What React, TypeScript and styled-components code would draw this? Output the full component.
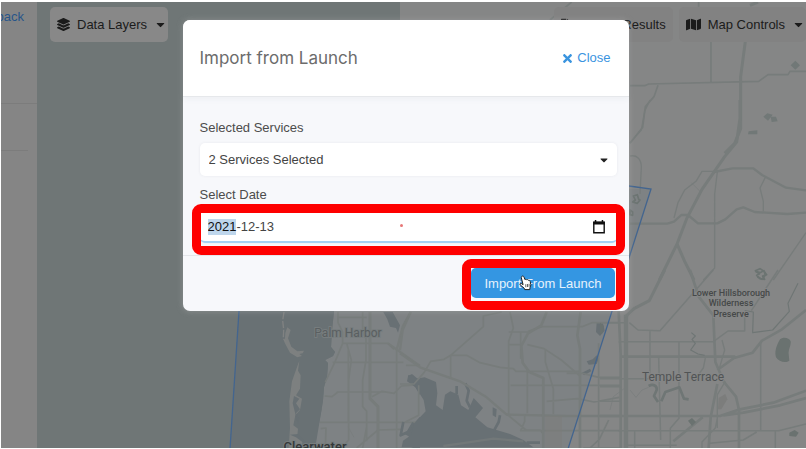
import React, { useEffect, useRef } from 'react';
import styled, { createGlobalStyle, css } from 'styled-components';
import { FaLayerGroup, FaMap, FaFileExport, FaTimes, FaCaretDown } from 'react-icons/fa';

const GlobalStyle = createGlobalStyle`
  *, *::before, *::after { box-sizing: border-box; }
  body { margin: 0; background: #fff; font-family: "Liberation Sans", Arial, sans-serif; font-size: 13px; }
  button, input, select { font: inherit; margin: 0; }
`;

const Page = styled.div`
  display: flex;
  height: 100vh;
  padding: 2px 0 1px 1px;
`;

const Shell = styled.div`
  position: relative;
  display: flex;
  flex: 1;
  min-width: 0;
  overflow: hidden;
`;

const Sidebar = styled.aside`
  display: flex;
  flex-direction: column;
  flex: 0 0 36px;
  overflow: hidden;
  background: #858585;
`;

const SidebarTop = styled.div`
  display: flex;
  justify-content: flex-end;
  height: 102px;
  padding: 5px 13px 0 0;
  border-bottom: 1px solid #7c7c7c;
`;

const BackLink = styled.a`
  height: 20px;
  color: #28558a;
  line-height: 20px;
  text-decoration: none;
`;

const SidebarRow = styled.div`
  height: 47px;
  margin-right: 9px;
  border-bottom: 1px solid #7c7c7c;
`;

const MapPane = styled.main`
  position: relative;
  flex: 1;
  min-width: 0;
  overflow: hidden;
  background: #6f7676;
`;

const MapCanvas = styled.svg`
  position: absolute;
  inset: 0;
  width: 100%;
  height: 100%;
`;

const Toolbar = styled.div`
  position: relative;
  display: flex;
  justify-content: space-between;
  padding: 5px 0 0 13px;
`;

const ToolGroup = styled.div`
  display: flex;
  gap: 6px;
`;

const ToolButton = styled.button<{ $menu?: boolean; $muted?: boolean }>`
  display: flex;
  align-items: center;
  gap: 7px;
  height: 35px;
  padding: 0 ${(p) => (p.$menu ? '1px' : '7px')} 0 7px;
  border: 0;
  border-radius: 5px;
  background: ${(p) => (p.$muted ? '#828282' : '#888888')};
  color: #1b1b1b;
  white-space: nowrap;
`;

const Overlay = styled.div`
  position: absolute;
  inset: 0;
  display: flex;
  justify-content: center;
  align-items: flex-start;
  padding: 18px 0 0 4px;
`;

const Dialog = styled.section`
  flex: 0 1 446px;
  border-radius: 7px;
  background: #f7f8fb;
  box-shadow: 0 0 6px rgba(190, 190, 190, 0.4);
`;

const DialogHeader = styled.header`
  display: flex;
  align-items: center;
  justify-content: space-between;
  height: 77px;
  padding: 0 18px 0 17px;
  border-bottom: 1px solid #e6e8eb;
  border-radius: 7px 7px 0 0;
  background: #fff;
  box-shadow: 0 2px 6px rgba(60, 70, 90, 0.05);
`;

const Title = styled.h1`
  margin: 0;
  color: #6c6c6c;
  font-family: Inter, "Liberation Sans", sans-serif;
  font-size: 17px;
  font-weight: 400;
  line-height: 24px;
`;

const CloseButton = styled.button`
  display: flex;
  align-items: center;
  gap: 3px;
  padding: 0;
  border: 0;
  background: none;
  color: #3a94df;
  line-height: 20px;
`;

const DialogBody = styled.div`
  display: flex;
  flex-direction: column;
  gap: 9px;
  padding: 21px 12px 12px 17px;
`;

const Field = styled.div`
  display: flex;
  flex-direction: column;
  gap: 5px;
`;

const Label = styled.label`
  color: #4c4c4c;
  line-height: 20px;
`;

const Control = styled.div`
  position: relative;
  display: flex;
  align-items: center;
  height: 33px;
  border-radius: 5px;
  background: #fff;
  box-shadow: 0 0 3px rgba(60, 70, 90, 0.08);
`;

const controlText = css`
  flex: 1;
  min-width: 0;
  border: 0;
  outline: 0;
  background: transparent;
  color: #444;
`;

const Select = styled.select`
  ${controlText}
  height: 33px;
  padding: 0 28px 0 9px;
  border-radius: 5px;
  appearance: none;
`;

const SelectCaret = styled(FaCaretDown)`
  position: absolute;
  right: 7px;
  color: #222;
  pointer-events: none;
`;

const DateControl = styled(Control)`
  border-bottom: 2px solid #a4d0f4;
`;

const DateInput = styled.input`
  ${controlText}
  padding: 2px 8px 0;
  line-height: 16px;
  &::selection {
    background: #bed6ec;
    color: #111;
  }
`;

const PickerButton = styled.button`
  display: flex;
  padding: 2px 11px 0 8px;
  border: 0;
  background: none;
  color: #111;
`;

const RequiredDot = styled.span`
  position: absolute;
  left: 48%;
  width: 3px;
  height: 3px;
  border-radius: 50%;
  background: #e77777;
`;

const Callout = styled.span<{ $area: 'field' | 'action' }>`
  position: absolute;
  z-index: 1;
  inset: ${(p) => (p.$area === 'field' ? '-6px -8px -14px' : '-9px -10px -12px -9px')};
  border: 9px solid #fe0000;
  border-radius: 9px;
  pointer-events: none;
`;

const DialogFooter = styled.footer`
  display: flex;
  justify-content: flex-end;
  padding: 12px 14px 13px;
  border-top: 1px solid #e4e6ea;
`;

const SubmitWrap = styled.div`
  position: relative;
  display: flex;
`;

const SubmitButton = styled.button`
  height: 30px;
  padding: 0 13px;
  border: 0;
  border-radius: 5px;
  background: #3496e2;
  color: #e6f2fc;
  white-space: nowrap;
`;

const Pointer = styled.svg`
  position: absolute;
  top: 7px;
  left: 48px;
  pointer-events: none;
`;

function CalendarIcon() {
  return (
    <svg width="14" height="14" viewBox="0 0 14 14" aria-hidden="true">
      <path d="M1.8 2.5h10.4v10.2H1.8z" fill="none" stroke="currentColor" strokeWidth="1.4" />
      <path d="M1.2 1.6h11.6v3H1.2zM2.8 0h1.5v2H2.8zM9.7 0h1.5v2H9.7z" fill="currentColor" />
    </svg>
  );
}

function HandPointer() {
  return (
    <Pointer width="13" height="16" viewBox="0 0 13 16" aria-hidden="true">
      <path
        d="M3.2 1.2c.8-.4 1.4 0 1.8.9l1 2.6c.5-.6 1.3-.5 1.7.1.6-.4 1.4-.2 1.7.5.9-.3 1.6.2 1.8 1.1l.6 3.2c.1 1.3-.4 2-.8 3.1l-.2 1.9H5.7l-.6-1.5L1.3 10c-.8-1 .1-2 1.2-1.4l1.6 1.1L2.4 3c-.2-.8 0-1.5.8-1.8Z"
        fill="#fff"
        stroke="#222"
        strokeWidth="1"
      />
      <path d="M6.8 9.2v3M8.5 9v3M10.1 8.8v3" stroke="#222" strokeWidth=".7" />
    </Pointer>
  );
}

const water = '#687074';
const road = '#777c7b';

function CoastalMap() {
  return (
    <MapCanvas viewBox="37 2 769 446" preserveAspectRatio="xMinYMin slice" aria-label="Map of Tampa Bay">
      <path d="M400 0H806V449H315L317 430 319 423 321 413 323 400 324 387 327 377 328 363 325 360 333 356 335 352 331 347 332 330 334 311V180L400 90Z" fill="#858686" />
      <path d="M245 189L651 189 568 449H230L239 311Z" fill="#45607a" opacity=".1" />
      <path d="M239 311H334L332 330 331 347 335 352 333 356 325 360 328 363 327 377 324 387 323 400 321 413 315 449H230Z" fill="#697174" />

      {/* Clearwater coast and Palm Harbor */}
      <g transform="translate(200 290) scale(.33333)" fill="none" stroke={road} strokeLinejoin="round">
        <path d="M262 112l10 8-8 25 10 25 18 14 20-2-4 8-10 2 8 6-14 4-22-14-16-30 2-30zM298 212l-4 30 8 14-2 40-12 20 18 10-6 34-14 16-6 30 14 10-2 20 16 16-4 22h-38l4-60-2-80 8-60 14-40z" fill="#7d8080" stroke="none" />
        <path d="M252 66l-4 26 3 26-1 26 6 12" stroke="#808282" strokeWidth="4" strokeDasharray="22 5" />
        <path d="M282 318l16 8-10 14 12 18-12 12 10 14-4 18-8-30-8-32z" fill={water} stroke="none" />
        <path d="M270 434l24-2 24 24-6 4-24-18z" fill={water} stroke="none" />
        <path d="M550 66l12 22 8 22 18 4 6 14 6-22-12-22-10-18zM624 258l12-6 24 20v44l-14-24-20-18zM660 380l-22 24-24 28 14 8-18 22 30 12h20z" fill={water} stroke="none" />
        <path d="M414 66v32l14 28v34l-24 58-28 58M415 82h85M488 66v58l10 22v64l-10 60v80l12 14v90M428 160h136l18 18M398 217h212M410 306h142M374 318l22 2 18-14M360 397h300M445 180v220M440 160l14 50-8 60v180l-20 22M590 180v294M470 474l64-54 70-2M376 474l2-60-16 2M660 226h-42M516 320l30-16 36 6 22-22 56-4M500 410l-12 64" strokeWidth="5" />
        <path d="M510 66v260l24 24v124" strokeWidth="9" />
        <path d="M632 66l-24 44-18 70M564 160l96 68" strokeWidth="7" />
        <path d="M444 410l18 32" strokeWidth="2" />
      </g>

      {/* Old Tampa Bay */}
      <g transform="translate(400 290) scale(.33333)" fill="none" stroke={road} strokeLinejoin="round">
        <path d="M25 255l15 2 4 10 30-5 34 14 4 34-4 36 20 14 7-46 16-10 24 10 8 32 22 14 16-36 28 30-23 28 36 30 68 20 40 18 30 22H5l4-20 24-16 10-36 34-36-6-34-24-38-26-18zM590 98l18-2 6 26-14 16-12-12zM590 196l6 10-6 16-24 2-6-10 18-6zM546 248l24-12 4 8-22 12zM278 352l12 6-2 24-10-6z" fill={water} stroke="none" />
        <path d="M170 288v24M196 280l10 22-6 30 10 20M300 376l-4 20-14 26M380 458h40M10 396l-8 40 22-10 16-28" stroke={water} strokeWidth="8" />
        <path d="M32 66L8 120 0 180M0 190l60 42 120 42 80 48 60 52 180 4h160" strokeWidth="7" />
        <path d="M305 66l-55 12v32L152 196v70M330 66l10 48-14 40v218M326 126h58M384 124l42-14h120l30-12h84M326 164h36M382 164l50 12 52 34 56 48M152 196l-20 12-40 6-20 34-30 34H0M152 196h48l40 22 60 14 40 4 8 8h190M362 126v80M436 176v40l24 80v76M382 240v130M332 286h328M440 334l92-8 50 10 76-14M374 374v20l-12 28h300M550 474h110M500 250h48l48 12h64M596 160v314M56 286v90l-40 20M320 372l58 48h42l8 10M626 390l-28 58-28 26" strokeWidth="5" />
        <path d="M440 66l-16 40-40 24-20 38 4 50 20 28 42 18v210M542 66l-10 70 8 40v298" strokeWidth="8" />
        <path d="M130 468l70-10 80-12 90 8" stroke="#727879" strokeWidth="7" />
        <path d="M436 378h50v96h-50z" fill="#7b7b7a" stroke="none" opacity=".5" />
      </g>

      {/* Northern highways */}
      <g transform="translate(540 0) scale(.33333)" fill="none" stroke={road} strokeLinejoin="round">
        <path d="M30 60L95 6M476 6v14M513 124v122M270 257h44l12-5 330-8 28-20h60l6-10h48M354 256l-12 34-26 30-8 62-38 48" strokeWidth="5" />
        <path d="M630 16l24-10M616 124l-14 106v156l-18 44-30 30" strokeWidth="9" />
        <path d="M766 182l14 14-14 13-14-13zM670 350l12-10 16 4-14 18zM692 350h16l5 14-18 2zM626 394l26-3v12h-28z" fill="#717877" stroke="none" />
      </g>

      {/* Interstate corridor */}
      <g transform="translate(600 100) scale(.33333)" fill="none" stroke={road} strokeLinejoin="round">
        <path d="M420 0v54l-10 72-36 44-68 98-46 88-28 74-54 110M232 434l22 50 28 56" strokeWidth="9" />
        <path d="M342 216l56-11h62l26 20 72 38 60 8M90 371h112l20-6 22-20h20l30 25h58l24-12 34-30 20-6 34 14 98 6 56-4" strokeWidth="7" />
        <path d="M342 214h-36l-18 30-34 26-20 38-12 46M352 216l-8 66v222l-34 36M496 232l-16 32 10 40v30M150 0l-16 34-10 56-34 38M90 168c20-4 34 8 34 34l-4 80M618 398L520 540" strokeWidth="4" />
        <path d="M274 248l26 26" strokeWidth="2" />
        <path d="M100 288l12-4 4 14 4 2-8 10-14-4 8-6zM90 330l8 6v10l-8-2zM466 512l14-6 12 8 8 10-12 4 6 10-14-2-10-10 8-4z" fill="none" stroke="#6c7472" strokeWidth="5" />
      </g>

      {/* Temple Terrace grid */}
      <g transform="translate(600 270) scale(.33333)" fill="none" stroke={road} strokeLinejoin="round">
        <path d="M78 534V134" strokeWidth="13" />
        <path d="M78 138l24-22 46-24 46-92" strokeWidth="9" />
        <path d="M56 124l6 130v280M270 0l26 80 44 56 6 140 26 60 36 44 9 40v114M352 300l50-36 56-16 28-36 60-34 72-58M62 260h344M0 438h360l60-20 100-20 98-36M352 342l-20 100-6 92M220 514l88-72M370 436l60-8 110-22 78-22" strokeWidth="8" />
        <path d="M0 158h78M88 158l26 22 66 2L340 0M56 215h284l44-32h50v-60M150 184v142M0 326h150M237 215v230l-26 30v59M176 262l6 248M482 218v262M56 482h480l82-20M526 482v52M104 482v52M0 350h62M0 394h62M330 520l100-10 40-24M534 0l-80 122M80 526h150" strokeWidth="4.500" />
        <path d="M352 444l-6 30-40 42v18M376 334l-24 40v100M366 210l8 30-18 62M316 264l-6 30-30 40" strokeWidth="4" />
        <path d="M146 348c14-8 26 0 24 12l-8 18 12 18M184 394l12-28 42-14 14 34 14 2" stroke="#6f7675" strokeWidth="8" />
        <path d="M274 188l12 10-10 10 10 12-14 20 22 12 20 4M434 122l26 4-2 62 60-8 50-56-4-24 30-60" stroke="#6f7675" strokeWidth="3.500" />
        <path d="M90 360l18 22 18-22 20-8M30 420l10-40 40-30" strokeWidth="2" />
        <path d="M540 208c8-8 28-6 32 6 2 14-8 24-6 38l2 20c-10 8-32 4-40-10-6-18 4-40 12-54zM264 452l12-8 12 12-12 12zM568 488l16-8 12 8-8 12-20-2zM0 158l12 10-6 24-6-2z" fill="#6a7270" stroke="none" />
        <path d="M356 384l20-12 6 16-18 30h-10z" fill="#7c7d7c" stroke="none" />
        <path d="M466 4l14 4 12-6 4 14-10 12-14-8" stroke="#6c7472" strokeWidth="5" />
      </g>

      <path d="M239 311L230 449M629 186L651 189 568 449" fill="none" stroke="#43658f" strokeWidth="1.300" />

      <g fontFamily="Roboto, sans-serif" fill="#515455" stroke="#858686" strokeWidth="2" paintOrder="stroke" textAnchor="middle">
        <text x="348" y="337" fontSize="12" fill="#5a5f61" stroke="#777d7e">Palm Harbor</text>
        <text x="683" y="381" fontSize="12">Temple Terrace</text>
        <g fontSize="9" fontWeight="500" fill="#464949">
          <text x="731" y="296">Lower Hillsborough</text>
          <text x="731" y="306">Wilderness</text>
          <text x="731" y="317">Preserve</text>
        </g>
        <text x="315" y="451" fontSize="13" fontWeight="500" fill="#343839" stroke="#777d7e">Clearwater</text>
      </g>
    </MapCanvas>
  );
}

function ImportDialog() {
  const dateRef = useRef<HTMLInputElement>(null);

  useEffect(() => {
    dateRef.current?.focus();
    dateRef.current?.setSelectionRange(0, 4);
  }, []);

  return (
    <Dialog role="dialog" aria-labelledby="dialog-title">
      <DialogHeader>
        <Title id="dialog-title">Import from Launch</Title>
        <CloseButton type="button">
          <FaTimes size={13} />
          Close
        </CloseButton>
      </DialogHeader>
      <DialogBody>
        <Field>
          <Label htmlFor="services">Selected Services</Label>
          <Control>
            <Select id="services" defaultValue="two">
              <option value="two">2 Services Selected</option>
            </Select>
            <SelectCaret size={12} />
          </Control>
        </Field>
        <Field>
          <Label htmlFor="date">Select Date</Label>
          <DateControl>
            <DateInput id="date" ref={dateRef} type="text" inputMode="numeric" defaultValue="2021-12-13" />
            <RequiredDot />
            <PickerButton type="button" aria-label="Open calendar">
              <CalendarIcon />
            </PickerButton>
            <Callout $area="field" />
          </DateControl>
        </Field>
      </DialogBody>
      <DialogFooter>
        <SubmitWrap>
          <SubmitButton type="button">Import From Launch</SubmitButton>
          <HandPointer />
          <Callout $area="action" />
        </SubmitWrap>
      </DialogFooter>
    </Dialog>
  );
}

export default function App() {
  return (
    <>
      <GlobalStyle />
      <Page>
        <Shell>
          <Sidebar>
            <SidebarTop>
              <BackLink href="#back">back</BackLink>
            </SidebarTop>
            <SidebarRow />
          </Sidebar>
          <MapPane>
            <CoastalMap />
            <Toolbar>
              <ToolButton type="button" $menu>
                <FaLayerGroup size={13} />
                Data Layers
                <FaCaretDown size={13} />
              </ToolButton>
              <ToolGroup>
                <ToolButton type="button" $muted>
                  <FaFileExport size={13} />
                  Export Results
                </ToolButton>
                <ToolButton type="button" $menu $muted>
                  <FaMap size={15} />
                  Map Controls
                  <FaCaretDown size={13} />
                </ToolButton>
              </ToolGroup>
            </Toolbar>
          </MapPane>
          <Overlay>
            <ImportDialog />
          </Overlay>
        </Shell>
      </Page>
    </>
  );
}
